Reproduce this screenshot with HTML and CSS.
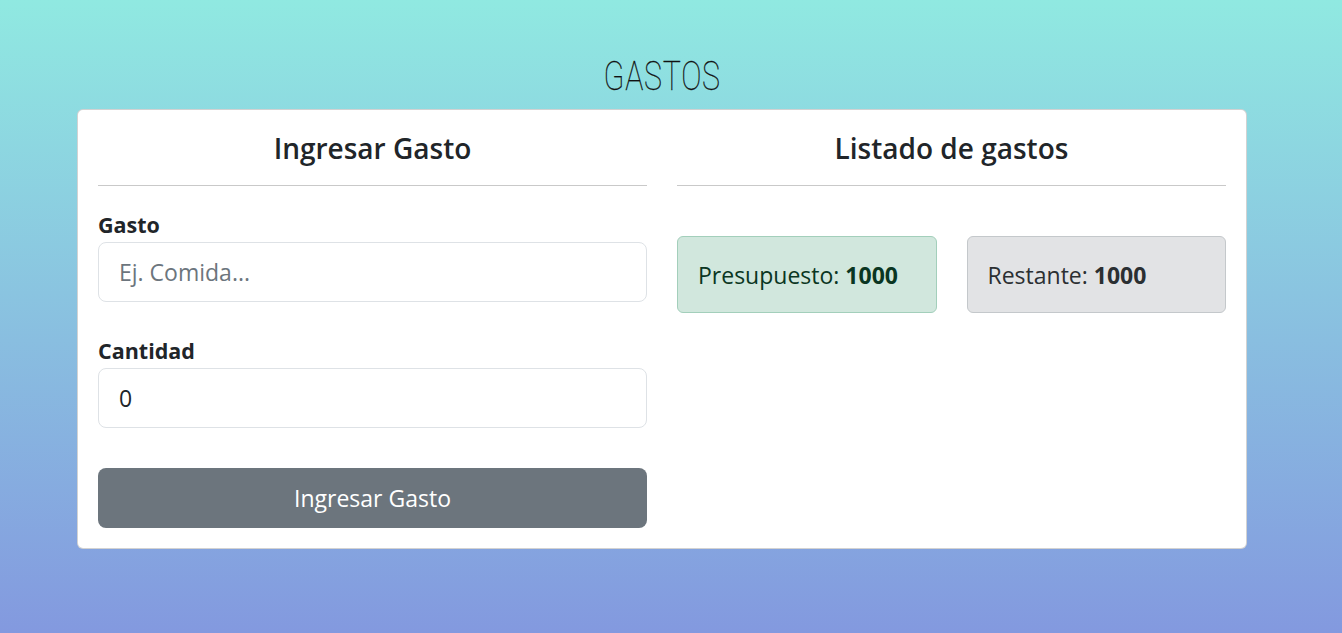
FILE: index.html
```html
<!DOCTYPE html>
<html lang="es">
<head>
<meta charset="utf-8">
<title>Gastos</title>
<link rel="stylesheet" href="styles.css">
</head>
<body>
<div class="page">
  <h1 class="title"><span class="title-text">GASTOS</span></h1>
  <div class="card">
    <section class="col">
      <h2 class="col-title">Ingresar Gasto</h2>
      <hr class="sep">
      <form class="form">
        <label class="label" for="gasto">Gasto</label>
        <input class="input" id="gasto" type="text" placeholder="Ej. Comida...">
        <label class="label label-2" for="cantidad">Cantidad</label>
        <input class="input" id="cantidad" type="number" value="0">
        <button class="btn" type="button">Ingresar Gasto</button>
      </form>
    </section>
    <section class="col">
      <h2 class="col-title">Listado de gastos</h2>
      <hr class="sep">
      <div class="boxes">
        <div class="box box-success"><span>Presupuesto: <strong>1000</strong></span></div>
        <div class="box box-secondary"><span>Restante: <strong>1000</strong></span></div>
      </div>
    </section>
  </div>
</div>
</body>
</html>
```

FILE: styles.css
```css
* { box-sizing: border-box; }

html, body {
  margin: 0;
  height: 100%;
}

body {
  background: linear-gradient(to bottom, #90e9e1 0%, #8399df 100%);
  font-family: "Open Sans", "Noto Sans", sans-serif;
  color: #212529;
  overflow: hidden;
}

.page {
  width: 1325px;
  padding-top: 50px;
}

.title {
  margin: 0;
  height: 59px;
  text-align: center;
  font-family: Roboto, sans-serif;
  font-weight: 100;
  font-size: 41px;
  line-height: 52px;
  color: #111;
}

.title-text {
  display: inline-block;
  transform: scaleX(0.74);
  letter-spacing: 1px;
  -webkit-text-stroke: 0.3px #111;
}

.card {
  width: 1170px;
  margin: 0 0 0 77px;
  background: #fff;
  border: 1px solid rgba(0, 0, 0, 0.175);
  border-radius: 6px;
  padding: 20px;
  display: grid;
  grid-template-columns: 1fr 1fr;
  column-gap: 30px;
}

.col-title {
  margin: 0;
  height: 40px;
  line-height: 36px;
  text-align: center;
  font-size: 28px;
  font-weight: 600;
  color: #212529;
}

.sep {
  margin: 15px 0 0;
  border: 0;
  border-top: 1px solid #c9c9c9;
}

.form {
  display: flex;
  flex-direction: column;
  padding-top: 27px;
}

.label {
  font-size: 21.5px;
  font-weight: 700;
  line-height: 24px;
  margin-bottom: 5px;
}

.label-2 {
  margin-top: 37px;
}

.input {
  height: 60px;
  width: 100%;
  border: 1px solid #dee2e6;
  border-radius: 8px;
  padding: 0 20px;
  font-family: inherit;
  font-size: 23px;
  color: #212529;
  background: #fff;
  outline: none;
  -moz-appearance: textfield;
}

.input::placeholder {
  color: #6c757d;
}

.input::-webkit-outer-spin-button,
.input::-webkit-inner-spin-button {
  -webkit-appearance: none;
  margin: 0;
}

.btn {
  margin-top: 40px;
  height: 60px;
  width: 100%;
  border: 0;
  border-radius: 8px;
  background: #6c757d;
  color: #fff;
  font-family: inherit;
  font-size: 23px;
}

.boxes {
  margin-top: 50px;
  display: grid;
  grid-template-columns: 1fr 1fr;
  column-gap: 30px;
}

.box {
  height: 77px;
  display: flex;
  align-items: center;
  padding: 0 20px;
  border-radius: 6px;
  border: 1px solid;
  font-size: 23px;
}

.box strong {
  font-weight: 700;
}

.box-success {
  background: #d1e7dd;
  border-color: #a3cfbb;
  color: #0a3622;
}

.box-secondary {
  background: #e2e3e5;
  border-color: #c4c8cb;
  color: #2b2f32;
}
```
